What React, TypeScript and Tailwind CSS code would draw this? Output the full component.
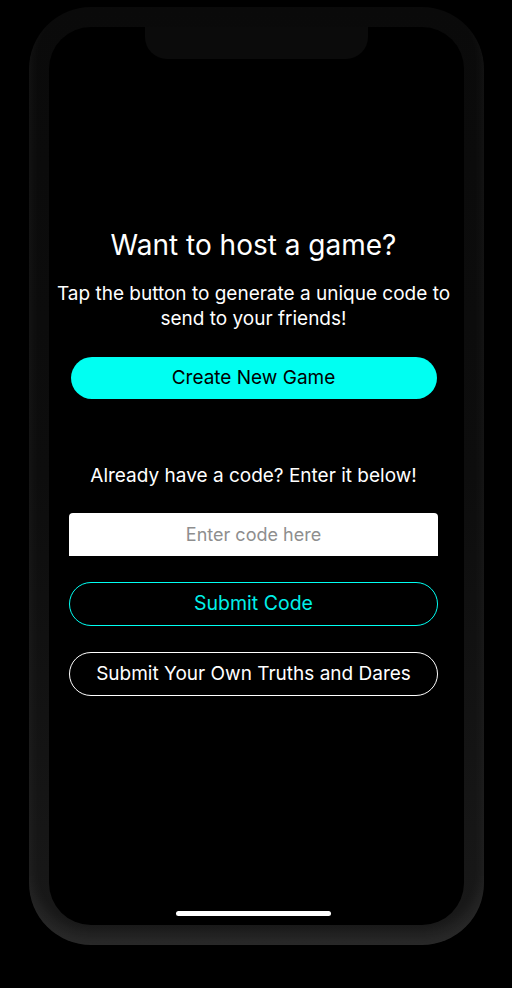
const font = { fontFamily: 'Inter, "Noto Sans", sans-serif' };

const Notch = () => (
  <div className="absolute top-0 left-[96px] h-[32px] w-[223px] rounded-b-[22px] bg-[#0b0b0b]" />
);

const HomeBar = () => (
  <div className="absolute bottom-[9px] left-[127px] h-[5px] w-[155px] rounded-full bg-white" />
);

export default function App() {
  return (
    <div className="h-[988px] w-[512px] bg-black pt-[7px] pl-[29px]" style={font}>
      {/* phone frame */}
      <div className="h-[938px] w-[455px] rounded-[62px] bg-gradient-to-b from-[#0a0a0a] via-[#0d0d0d] to-[#191919] p-[20px] shadow-[inset_0_-12px_14px_rgba(255,255,255,0.07)]">
        <div className="relative h-full w-full rounded-[42px] bg-black">
          <Notch />

          <div className="flex flex-col items-center pr-[6px] pt-[201px] text-center">
            <h1 className="text-[28px] leading-[34px] font-normal text-white">
              Want to host a game?
            </h1>
            <p className="mt-[19px] whitespace-nowrap text-[19px] leading-[25px] text-white">
              Tap the button to generate a unique code to
              <br />
              send to your friends!
            </p>

            <button className="mt-[26px] h-[42px] w-[366px] rounded-full bg-[#00fff2] text-[19px] text-black">
              Create New Game
            </button>

            <p className="mt-[64px] whitespace-nowrap text-[19px] leading-[25px] text-white">
              Already have a code? Enter it below!
            </p>

            <input
              className="mt-[25px] h-[43px] w-[369px] rounded-t-[4px] bg-white text-center text-[18px] text-black outline-none placeholder:text-[#8e8e8e]"
              placeholder="Enter code here"
            />

            <button className="mt-[26px] h-[44px] w-[369px] rounded-full border border-[#00fff2] text-[19.5px] text-[#00f0ea]">
              Submit Code
            </button>

            <button className="mt-[26px] h-[44px] w-[369px] rounded-full border border-white text-[19px] text-white">
              Submit Your Own Truths and Dares
            </button>
          </div>

          <HomeBar />
        </div>
      </div>
    </div>
  );
}
